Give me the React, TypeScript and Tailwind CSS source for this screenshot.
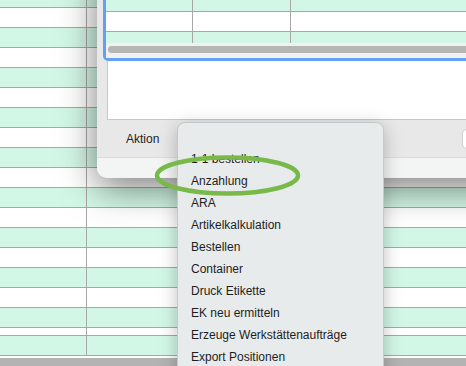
import React from "react";

const menuItems = [
  "1-1 bestellen",
  "Anzahlung",
  "ARA",
  "Artikelkalkulation",
  "Bestellen",
  "Container",
  "Druck Etikette",
  "EK neu ermitteln",
  "Erzeuge Werkstättenaufträge",
  "Export Positionen",
];

export default function App() {
  // background sheet rows: first is cut off at the top, then 20px stripes
  const rows: { h: string; mint: boolean }[] = [{ h: "h-[8px]", mint: true }];
  for (let i = 0; i < 16; i++) rows.push({ h: "h-[20px]", mint: i % 2 === 1 });
  rows.push({ h: "h-[8px]", mint: false });
  rows.push({ h: "h-[20px]", mint: true });

  return (
    <div
      className="relative w-[466px] h-[366px] overflow-hidden bg-white text-[#1e1e1e]"
      style={{ fontFamily: '"Liberation Sans", Arial, sans-serif' }}
    >
      {/* Spreadsheet behind the dialog */}
      <div className="flex flex-col">
        {rows.map((r, idx) => (
          <div
            key={idx}
            className={`flex ${r.h} border-b border-[#a8a8a8] ${r.mint ? "bg-[#d3f7e6]" : "bg-white"}`}
          >
            <div className="w-[87px] border-r border-[#a8a8a8]" />
            <div className="flex-1" />
          </div>
        ))}
        <div className="h-[2px] bg-white" />
        <div className="h-[20px] bg-[#b3b3b3]" />
      </div>

      {/* Dialog window */}
      <div className="absolute left-[97px] top-[-40px] w-[420px] h-[218px] rounded-[10px] bg-[#e8e8e8] shadow-[0_10px_36px_rgba(0,0,0,0.5)] flex flex-col overflow-hidden">
        <div className="mt-[10px] ml-[6px] border-[3px] border-[#62a0f4] rounded-[5px] bg-white flex flex-col">
          <div className="flex h-[39px] bg-[#d3f7e6] border-b border-[#a8a8a8]">
            <div className="w-[87px] border-r border-[#a8a8a8]" />
            <div className="w-[98px] border-r border-[#a8a8a8]" />
            <div className="flex-1" />
          </div>
          <div className="flex h-[20px] bg-white border-b border-[#a8a8a8]">
            <div className="w-[87px] border-r border-[#a8a8a8]" />
            <div className="w-[98px] border-r border-[#a8a8a8]" />
            <div className="flex-1" />
          </div>
          <div className="flex h-[11px] bg-[#d3f7e6]">
            <div className="w-[87px] border-r border-[#a8a8a8]" />
            <div className="w-[98px] border-r border-[#a8a8a8]" />
            <div className="flex-1" />
          </div>
          <div className="h-[15px] bg-[#f1f1f1] pt-[3px] pl-[2px]">
            <div className="h-[7px] rounded-full bg-[#b6b6b6]" />
          </div>
        </div>

        <div className="ml-[10px] h-[59px] bg-white border-l border-b border-[#c9c9c9]" />

        <div className="h-[38px] flex items-center justify-between border-b border-[#dcdcdc]">
          <span className="ml-[29px] text-[12px]">Aktion</span>
          <div className="mr-[-41px] w-[96px] h-[20px] rounded-[5px] bg-white border border-[#cfcfcf]" />
        </div>

        <div className="flex-1 bg-[#f3f5f5]" />
      </div>

      {/* Dropdown menu */}
      <div className="absolute left-[177px] top-[122px] w-[207px] h-[270px] rounded-[8px] bg-[#e8ebeb] border border-[#c6c9c9] shadow-[0_4px_18px_rgba(0,0,0,0.25)] pt-[25px] flex flex-col">
        {menuItems.map((item) => (
          <div key={item} className="h-[22px] flex items-center pl-[13px] text-[12px]">
            {item}
          </div>
        ))}
      </div>

      {/* Green highlight ellipse */}
      <svg className="absolute left-[150px] top-[150px]" width="160" height="52" viewBox="0 0 160 52">
        <ellipse cx="77.5" cy="25.5" rx="70.5" ry="18" fill="none" stroke="#78b94a" strokeWidth="4.5" />
      </svg>
    </div>
  );
}
